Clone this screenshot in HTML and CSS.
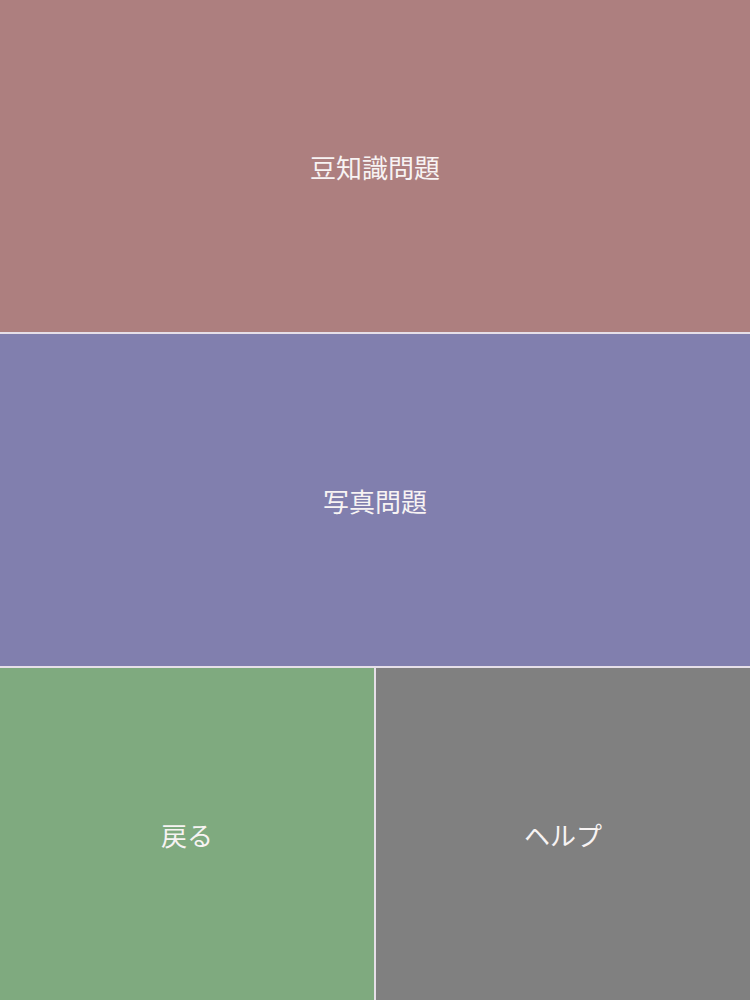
FILE: index.html
```html
<!DOCTYPE html>
<html>
<head>
<meta charset="utf-8">
<link rel="stylesheet" href="styles.css">
</head>
<body>

<div class="menu">
  <button class="tile trivia">豆知識問題</button>
  <button class="tile photo">写真問題</button>
  <div class="row">
    <button class="tile back">戻る</button>
    <button class="tile help">ヘルプ</button>
  </div>
</div>

</body>
</html>
```

FILE: styles.css
```css
html, body {
  margin: 0;
  height: 100%;
}

body {
  background-color: #e6dfe8;
  font-family: "Noto Sans CJK JP", "Noto Sans", sans-serif;
}

.menu {
  display: grid;
  grid-template-rows: 332px 332px 332px;
  gap: 2px;
  height: 1000px;
}

.row {
  display: grid;
  grid-template-columns: 374px 374px;
  gap: 2px;
}

.tile {
  border: none;
  margin: 0;
  padding: 0;
  color: #f7f3f3;
  font-family: inherit;
  font-size: 26px;
  cursor: pointer;
}

.trivia {
  background-color: #ad7f7f;
}

.photo {
  background-color: #817fae;
}

.back {
  background-color: #7faa7f;
}

.help {
  background-color: #808080;
}
```
